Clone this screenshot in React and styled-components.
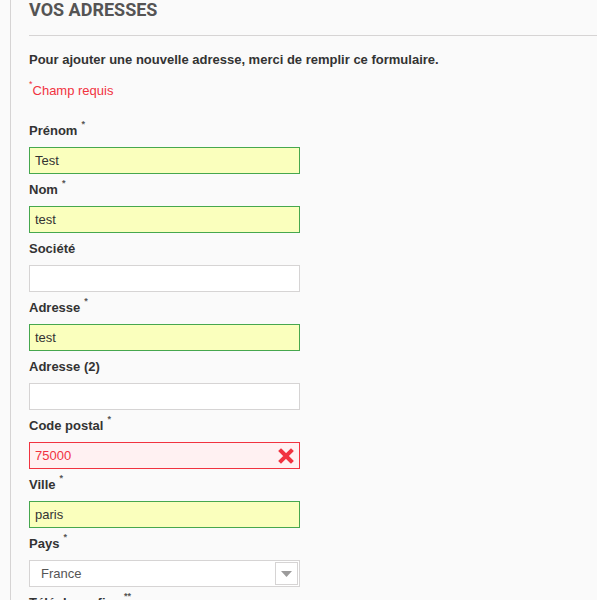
import React from "react";
import styled, { createGlobalStyle } from "styled-components";

const Global = createGlobalStyle`
  html, body { margin: 0; padding: 0; background: #fafafa; }
  body { font-family: "Liberation Sans", Arial, sans-serif; font-size: 13px; color: #333; overflow: hidden; }
`;

const Page = styled.div`
  padding-left: 10px;
  height: 600px;
  overflow: hidden;
`;

const Column = styled.div`
  border-left: 1px solid #d6d4d4;
  padding-left: 18px;
  min-height: 600px;
`;

const Heading = styled.h1`
  margin: 0;
  font-family: Roboto, "Liberation Sans", sans-serif;
  font-weight: 700;
  font-size: 18px;
  line-height: 20px;
  color: #555454;
  text-transform: uppercase;
  padding-bottom: 15px;
  border-bottom: 1px solid #d6d4d4;
`;

const Intro = styled.p`
  margin: 15px 0 0;
  font-weight: 700;
  line-height: 18px;
  color: #333;
`;

const Required = styled.p`
  margin: 13px 0 0;
  line-height: 18px;
  color: #f13340;
`;

const Sup = styled.sup`
  font-size: 9px;
  line-height: 0;
  vertical-align: top;
  position: relative;
  top: 2px;
  margin-left: ${(p) => (p.$gap ? "4px" : "0")};
  color: ${(p) => (p.$red ? "#f13340" : "#555")};
`;

const Form = styled.div`
  margin-top: 22px;
  display: flex;
  flex-direction: column;
`;

const Group = styled.div`
  display: flex;
  flex-direction: column;
  margin-bottom: 7px;
`;

const Label = styled.label`
  font-weight: 700;
  line-height: 18px;
  color: #333;
  margin-bottom: 7px;
`;

const Field = styled.div`
  position: relative;
  width: 271px;
  height: 27px;
  box-sizing: border-box;
  border: 1px solid
    ${(p) => (p.$state === "ok" ? "#46a74e" : p.$state === "error" ? "#f13340" : "#d6d4d4")};
  background: ${(p) => (p.$state === "ok" ? "#faffbd" : p.$state === "error" ? "#fff1f2" : "#fff")};
  color: ${(p) => (p.$state === "error" ? "#f13340" : "#333")};
  display: flex;
  align-items: center;
  padding-left: 5px;
  font-size: 13px;
`;

const ErrorIcon = styled.svg`
  position: absolute;
  right: 5px;
  top: 5px;
`;

const Select = styled.div`
  width: 271px;
  height: 27px;
  box-sizing: border-box;
  border: 1px solid #d6d4d4;
  background: #fff;
  display: flex;
  align-items: center;
  justify-content: space-between;
  padding: 1px 1px 1px 11px;
  color: #555;
  font-size: 13px;
`;

const Arrow = styled.div`
  width: 23px;
  height: 23px;
  box-sizing: border-box;
  border: 1px solid #d6d4d4;
  display: flex;
  align-items: center;
  justify-content: center;
`;

const fields = [
  { label: "Prénom", req: true, value: "Test", state: "ok" },
  { label: "Nom", req: true, value: "test", state: "ok" },
  { label: "Société", value: "" },
  { label: "Adresse", req: true, value: "test", state: "ok" },
  { label: "Adresse (2)", value: "" },
  { label: "Code postal", req: true, value: "75000", state: "error" },
  { label: "Ville", req: true, value: "paris", state: "ok" },
];

export default function App() {
  return (
    <>
      <Global />
      <Page>
        <Column>
          <Heading>Vos adresses</Heading>
          <Intro>Pour ajouter une nouvelle adresse, merci de remplir ce formulaire.</Intro>
          <Required>
            <Sup $red>*</Sup>Champ requis
          </Required>
          <Form>
            {fields.map((f) => (
              <Group key={f.label}>
                <Label>
                  {f.label}
                  {f.req && <Sup $gap>*</Sup>}
                </Label>
                <Field $state={f.state}>
                  {f.value}
                  {f.state === "error" && (
                    <ErrorIcon width="16" height="16" viewBox="0 0 16 16">
                      <path d="M3 3 L13 13 M13 3 L3 13" stroke="#f13340" strokeWidth="4" strokeLinecap="square" />
                    </ErrorIcon>
                  )}
                </Field>
              </Group>
            ))}
            <Group>
              <Label>
                Pays<Sup $gap>*</Sup>
              </Label>
              <Select>
                France
                <Arrow>
                  <svg width="11" height="6" viewBox="0 0 11 6">
                    <path d="M0 0 H11 L5.5 6 Z" fill="#9c9b9b" />
                  </svg>
                </Arrow>
              </Select>
            </Group>
            <Group>
              <Label>
                Téléphone fixe<Sup $gap>**</Sup>
              </Label>
            </Group>
          </Form>
        </Column>
      </Page>
    </>
  );
}
